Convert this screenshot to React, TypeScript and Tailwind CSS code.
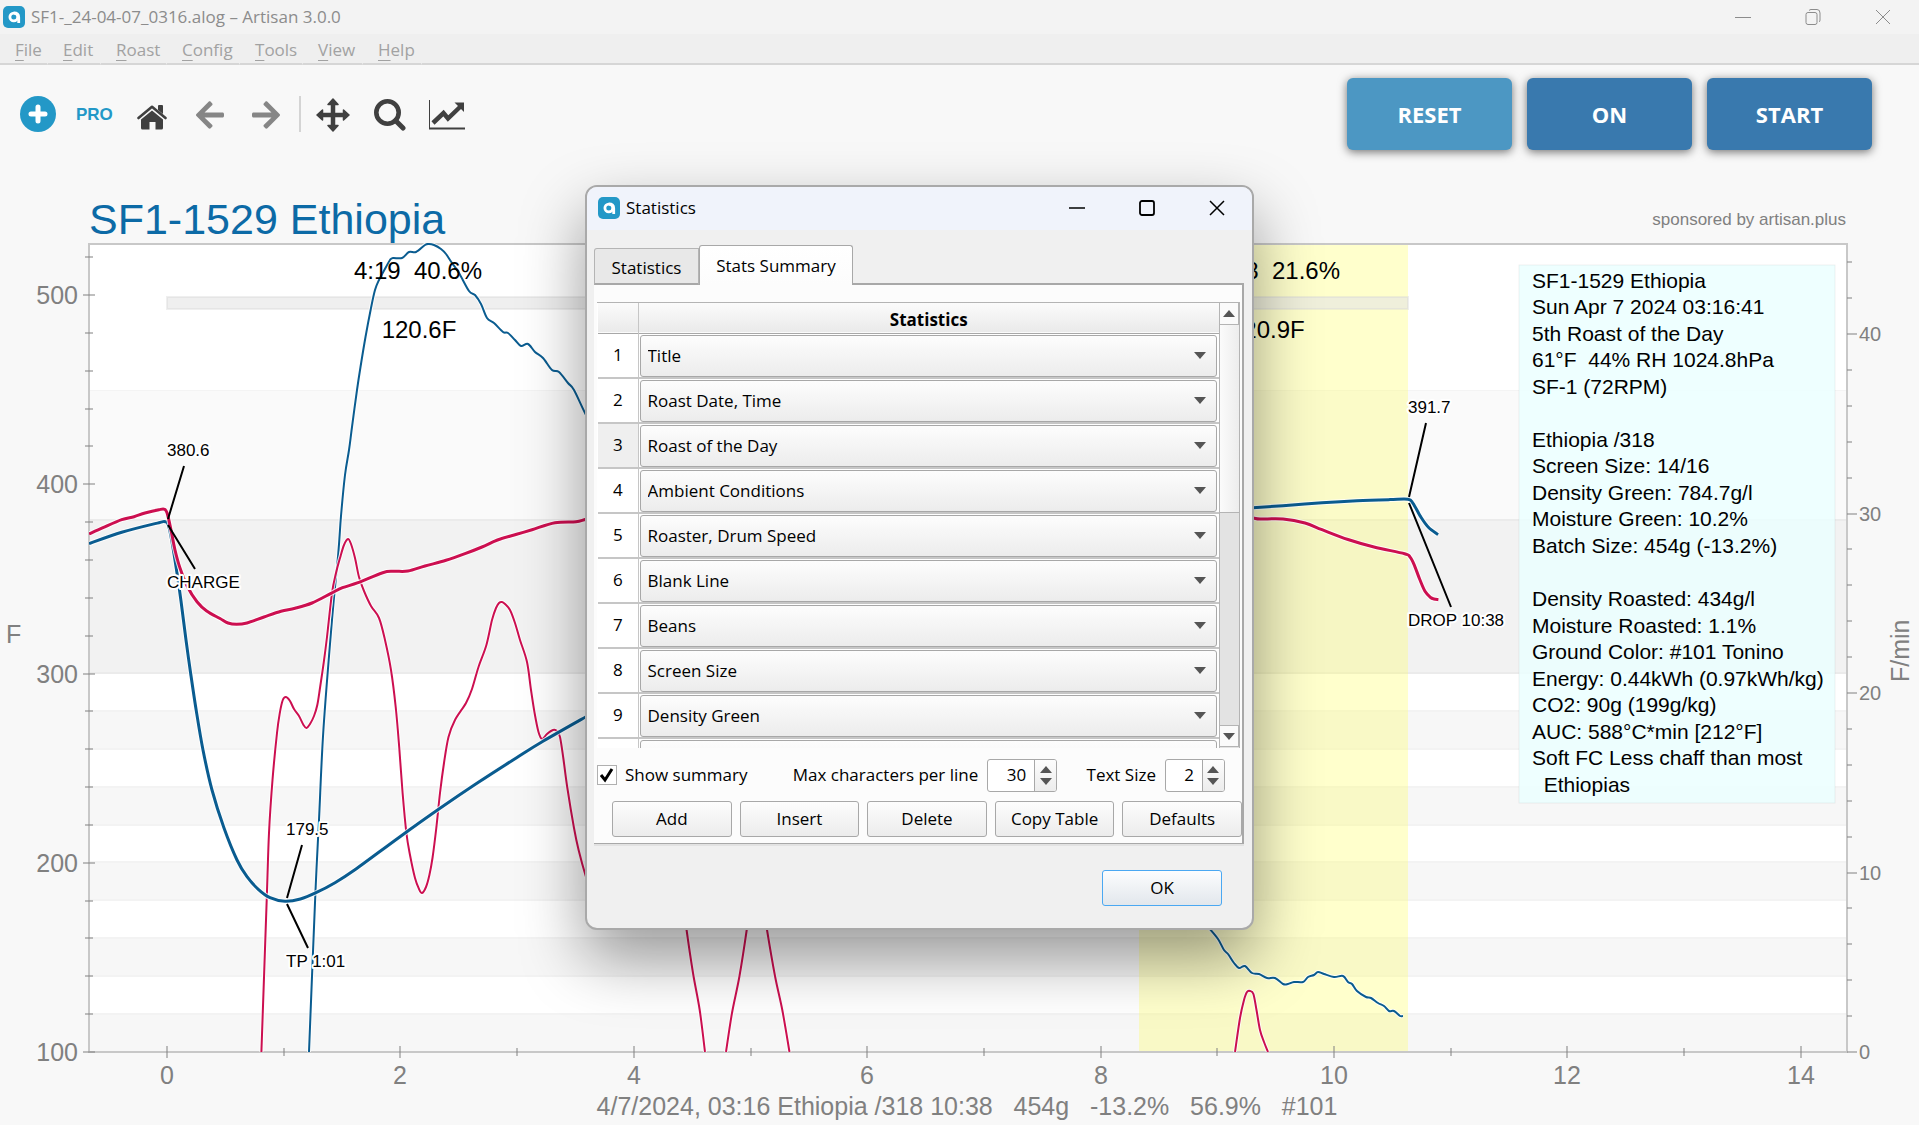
import { useId, useState } from "react";
import { FaArrowLeft, FaArrowRight } from "react-icons/fa";

type Point = [number, number];

const STAT_TYPES = [
  "Title",
  "Roast Date, Time",
  "Roast of the Day",
  "Ambient Conditions",
  "Roaster, Drum Speed",
  "Blank Line",
  "Beans",
  "Screen Size",
  "Density Green",
];

const SUMMARY = [
  "SF1-1529 Ethiopia",
  "Sun Apr 7 2024 03:16:41",
  "5th Roast of the Day",
  "61°F  44% RH 1024.8hPa",
  "SF-1 (72RPM)",
  "",
  "Ethiopia /318",
  "Screen Size: 14/16",
  "Density Green: 784.7g/l",
  "Moisture Green: 10.2%",
  "Batch Size: 454g (-13.2%)",
  "",
  "Density Roasted: 434g/l",
  "Moisture Roasted: 1.1%",
  "Ground Color: #101 Tonino",
  "Energy: 0.44kWh (0.97kWh/kg)",
  "CO2: 90g (199g/kg)",
  "AUC: 588°C*min [212°F]",
  "Soft FC Less chaff than most",
  "  Ethiopias",
];

const MENUS = [
  { label: "File", width: "w-12" },
  { label: "Edit", width: "w-[53px]" },
  { label: "Roast", width: "w-[66px]" },
  { label: "Config", width: "w-[73px]" },
  { label: "Tools", width: "w-[63px]" },
  { label: "View", width: "w-[60px]" },
  { label: "Help", width: "w-[59px]" },
];

/* Curves, in chart units */
const DELTA_BT: Point[][] = [
  [[309, 1052], [315.4, 893], [319, 820], [323.4, 730], [332, 620], [338.3, 553], [341, 516], [345, 475], [349, 450], [352, 427], [357, 390], [360.5, 367], [365.5, 337], [371, 308], [375, 290], [379, 280], [386, 267], [390, 260], [393, 258], [402, 258], [409, 252], [416, 252], [425, 245], [429, 244], [434, 245], [441, 249], [446, 254], [452, 263], [459, 273], [469, 291], [475, 295], [481, 304], [487, 318], [494, 323], [503, 332], [508, 333], [515, 340], [521, 346], [528, 344], [535, 352], [543, 358], [552, 370], [559, 372], [568, 383], [574, 390], [586, 415], [600, 440]],
  [[1200, 918], [1209, 928], [1218, 939], [1224, 950], [1228, 954], [1234, 963], [1239, 968], [1245, 966], [1252, 973], [1259, 974], [1267, 978], [1275, 978], [1283, 984], [1288, 984], [1294, 982], [1303, 982], [1308, 977], [1314, 975], [1318, 972], [1324, 974], [1334, 977], [1343, 976], [1348, 982], [1352, 984], [1357, 991], [1366, 997], [1371, 998], [1378, 1003], [1384, 1006], [1389, 1011], [1394, 1011], [1400, 1016], [1403, 1016]],
];

const DELTA_ET: Point[][] = [
  [[261.4, 1052], [266.7, 900], [269, 833], [272.5, 780], [277, 733], [279.8, 713], [282.8, 700], [286, 697], [290, 701], [294, 709], [299, 716], [303.5, 725], [306.5, 728], [310, 724], [314, 716], [317.3, 705], [320, 688], [323.8, 662], [327, 637], [332, 593], [336, 573], [340, 558], [344, 545], [348, 539], [351, 544], [355, 558], [359, 577], [364, 591], [371, 606], [379, 618], [385, 640], [391, 670], [395.7, 707], [399.2, 747], [402.6, 793], [406.4, 833], [410, 855], [415, 878], [419, 889], [422, 893], [426, 887], [429.4, 875], [432.5, 858], [436.3, 828], [440, 793], [444, 763], [448.5, 737], [455, 720], [466, 703], [472, 689], [478.5, 667], [486.4, 645], [492, 620], [496, 608], [499, 603], [502, 602], [505, 604], [510, 610], [515, 623], [520, 640], [527, 662], [531, 690], [534.6, 713], [538.5, 732], [542, 739], [547, 734], [553, 730], [557, 731], [560, 737], [563.3, 758], [567.2, 787], [574, 828], [578.6, 850], [586, 877], [600, 920]],
  [[680, 880], [686.3, 928], [693, 973], [699.7, 1010], [705, 1052]],
  [[726, 1052], [732, 1013], [739.5, 976], [747, 928], [752, 890]],
  [[761, 890], [766.7, 928], [775, 976], [782.3, 1010], [789.5, 1052]],
  [[1235, 1052], [1240, 1018], [1244, 1000], [1247, 992], [1250, 991], [1253.4, 994], [1256.5, 1010], [1260, 1030], [1264, 1042], [1268, 1052]],
];

const ET: Point[][] = [
  [[89, 534], [103, 527.7], [121.7, 519.7], [134, 516.7], [145, 513], [159, 509.7], [164.6, 509.3], [167.2, 513.3], [171, 530], [175, 550], [180, 568], [187.5, 586.7], [197, 601.7], [206.7, 611], [220, 618.5], [228, 623], [236.5, 624.3], [247, 623], [264, 617], [281, 611.3], [295, 608.3], [312, 603], [331, 593.3], [342.5, 587.7], [358, 582.7], [382.7, 572.7], [394, 571.3], [408, 571], [425, 566], [446, 560.3], [465, 553.7], [482, 547], [497.5, 540], [516.6, 534.3], [532, 529.7], [555, 522.7], [576, 521.7], [586, 519.3], [600, 517]],
  [[1240, 517], [1253, 518], [1260, 519], [1283, 519], [1305, 523], [1322, 529.7], [1348, 539.5], [1374, 547], [1404.6, 553.7], [1410, 557], [1414, 564.3], [1419.7, 579.3], [1425, 591.3], [1430.6, 597.5], [1434, 599], [1438.4, 599.7]],
];

const BT: Point[][] = [
  [[89, 543.7], [121.7, 532.3], [159, 522.7], [165, 521.7], [168.4, 525], [172, 542], [177, 573], [181, 601], [186, 640], [190.6, 673], [196, 709], [203, 750], [212, 790], [224, 828], [237, 860], [247, 876.7], [258.3, 889.3], [270, 897.7], [285, 901.3], [300.4, 899], [316, 892.7], [335, 882.7], [356, 869], [400, 836.7], [440, 808.3], [478.4, 782.3], [516.6, 757.7], [543.4, 741], [586, 716.7], [600, 709]],
  [[1240, 508.5], [1253, 507.7], [1283, 505.7], [1322, 502.7], [1357, 500.7], [1390, 499.6], [1408, 499.3], [1413, 503.3], [1421, 517.3], [1428.4, 527.3], [1438, 534.7]],
];

function smooth(points: Point[]) {
  let d = `M${points[0][0]} ${points[0][1]}`;
  for (let i = 0; i < points.length - 1; i++) {
    const p0 = points[Math.max(i - 1, 0)];
    const p1 = points[i];
    const p2 = points[i + 1];
    const p3 = points[Math.min(i + 2, points.length - 1)];
    const c1 = [p1[0] + (p2[0] - p0[0]) / 6, p1[1] + (p2[1] - p0[1]) / 6];
    const c2 = [p2[0] - (p3[0] - p1[0]) / 6, p2[1] - (p3[1] - p1[1]) / 6];
    d += `C${c1[0]} ${c1[1]} ${c2[0]} ${c2[1]} ${p2[0]} ${p2[1]}`;
  }
  return d;
}

function Curve({ parts, color, width }: { parts: Point[][]; color: string; width: number }) {
  return (
    <g fill="none">
      {parts.map((part, i) => {
        const d = smooth(part);
        return (
          <g key={i}>
            <path d={d} stroke="#ffffff" strokeWidth={width + 2} opacity={0.8} />
            <path d={d} stroke={color} strokeWidth={width} />
          </g>
        );
      })}
    </g>
  );
}

const yOf = (f: number) => Math.round(1052 - (f - 100) * 1.8925);
const xOf = (m: number) => Math.round(167 + m * 116.7);
const rOf = (v: number) => Math.round(1052 - v * 17.95);
const range = (from: number, to: number, step: number) =>
  Array.from({ length: Math.floor((to - from) / step) + 1 }, (_, i) => from + i * step);

function Callout({ x, y, children }: { x: number; y: number; children: string }) {
  return (
    <text x={x} y={y} fontSize="17" fill="#000" stroke="#fff" strokeWidth="4" strokeLinejoin="round" paintOrder="stroke">
      {children}
    </text>
  );
}

function RoastChart() {
  return (
    <svg
      viewBox="0 180 1919 945"
      className="block h-auto w-full font-['Liberation_Sans',Arial,sans-serif]"
      role="img"
      aria-label="Roast profile SF1-1529 Ethiopia"
    >
      <defs>
        <clipPath id="plot">
          <rect x="89" y="243" width="1759" height="809" />
        </clipPath>
      </defs>

      <rect x="89" y="244" width="1758" height="808" fill="#fff" />
      <rect x="89" y="390" width="1758" height="130" fill="#fafafa" />
      <rect x="89" y="520" width="1758" height="153" fill="#f2f2f2" />
      <rect x="89" y="390" width="1758" height="1" fill="#f4f4f4" />
      <rect x="89" y="519" width="1758" height="2" fill="#ebebeb" />
      <rect x="89" y="672" width="1758" height="2" fill="#ebebeb" />
      {[711, 787, 862, 938, 1014].map((y) => (
        <g key={y}>
          <rect x="89" y={y} width="1758" height="38" fill="#f7f7f7" />
          <rect x="89" y={y - 1} width="1758" height="2" fill="#f3f3f3" />
          <rect x="89" y={y + 37} width="1758" height="2" fill="#f3f3f3" />
        </g>
      ))}
      <rect x="1139" y="244" width="269" height="808" fill="#ffff64" opacity="0.33" />
      <rect x="167" y="297" width="1241" height="12" fill="#e4e4e4" fillOpacity="0.6" stroke="#d8d8d8" strokeOpacity="0.4" strokeWidth="2" />

      <g stroke="#808080" strokeOpacity="0.5" strokeWidth="2">
        <path d="M89 244H1847V1052H89Z" fill="none" stroke="#c8c8c8" strokeOpacity="1" />
        {range(100, 500, 100).map((f) => (
          <path key={f} d={`M83 ${yOf(f)}H95`} />
        ))}
        {range(120, 520, 20).filter((f) => f % 100 !== 0).map((f) => (
          <path key={f} d={`M85 ${yOf(f)}H93`} />
        ))}
        {range(0, 40, 10).map((v) => (
          <path key={v} d={`M1847 ${rOf(v)}H1857`} />
        ))}
        {range(2, 44, 2).filter((v) => v % 10 !== 0).map((v) => (
          <path key={v} d={`M1847 ${rOf(v)}H1852`} />
        ))}
        {range(0, 14, 2).map((m) => (
          <path key={m} d={`M${xOf(m)} 1046V1058`} />
        ))}
        {range(1, 13, 2).map((m) => (
          <path key={m} d={`M${xOf(m)} 1048V1056`} />
        ))}
      </g>

      <g clipPath="url(#plot)">
        <Curve parts={DELTA_BT} color="#0a5c90" width={2} />
        <Curve parts={DELTA_ET} color="#cc0f50" width={2} />
        <Curve parts={BT} color="#0a5c90" width={3} />
        <Curve parts={ET} color="#cc0f50" width={3} />
      </g>

      <g stroke="#000" strokeWidth="2">
        <path d="M184 466L168 519M168 525L195 569" />
        <path d="M302 845L287 898M287 904L308 948" />
        <path d="M1426 423L1409 497M1409 503L1451 607" />
      </g>
      <Callout x={167} y={456}>380.6</Callout>
      <Callout x={167} y={588}>CHARGE</Callout>
      <Callout x={286} y={835}>179.5</Callout>
      <Callout x={286} y={967}>TP 1:01</Callout>
      <Callout x={1408} y={413}>391.7</Callout>
      <Callout x={1408} y={626}>DROP 10:38</Callout>

      <g fontSize="24" fill="#000" textAnchor="middle">
        <text x="418" y="279" className="whitespace-pre">{"4:19  40.6%"}</text>
        <text x="419" y="338">120.6F</text>
        <text x="1276" y="279" className="whitespace-pre">{"2:18  21.6%"}</text>
        <text x="1274" y="338">20.9F</text>
      </g>

      <text x="89" y="234" fontSize="43" fill="#0c6aa6">SF1-1529 Ethiopia</text>
      <text x="1846" y="225" fontSize="17" fill="#808080" textAnchor="end">sponsored by artisan.plus</text>

      <g fontSize="25" fill="#808080">
        {range(100, 500, 100).map((f) => (
          <text key={f} x="78" y={yOf(f) + 9} textAnchor="end">{f}</text>
        ))}
        {range(0, 14, 2).map((m) => (
          <text key={m} x={xOf(m)} y="1084" textAnchor="middle">{m}</text>
        ))}
        <text x="6" y="643">F</text>
        <text transform="translate(1909 682) rotate(-90)">F/min</text>
        <text x="967" y="1115" textAnchor="middle" className="whitespace-pre">
          {"4/7/2024, 03:16 Ethiopia /318 10:38   454g   -13.2%   56.9%   #101"}
        </text>
      </g>
      <g fontSize="20" fill="#808080">
        {range(0, 40, 10).map((v) => (
          <text key={v} x="1859" y={rOf(v) + 7}>{v}</text>
        ))}
      </g>

      <rect x="1519" y="265" width="316" height="538" fill="#ebffff" fillOpacity="0.85" stroke="#808080" strokeOpacity="0.12" />
      <g fontSize="21" fill="#000">
        {SUMMARY.map((line, i) => (
          <text key={i} x="1532" y={Math.floor(288 + i * 26.54)} className="whitespace-pre">{line}</text>
        ))}
      </g>
    </svg>
  );
}

function Logo() {
  return (
    <svg viewBox="0 0 22 22" className="size-[22px] shrink-0" aria-hidden="true">
      <rect width="22" height="22" rx="5" fill="#2398c7" />
      <circle cx="10.8" cy="11" r="3.9" fill="none" stroke="#fff" strokeWidth="2.8" />
      <path d="M10.8 7C14.500 7 15.700 9 15.700 11.500V17" fill="none" stroke="#fff" strokeWidth="2.8" />
    </svg>
  );
}

function Triangle({ up = false }: { up?: boolean }) {
  return (
    <svg viewBox="0 0 12 7" className="h-[7px] w-3" aria-hidden="true">
      <path d={up ? "M0 7L6 0L12 7Z" : "M0 0H12L6 7Z"} fill="#555" />
    </svg>
  );
}

function StatRow({ index, value, active }: { index: number; value: string; active: boolean }) {
  const [current, setCurrent] = useState(value);
  return (
    <tr className="border-b-2 border-[#c6c6c6]">
      <th
        scope="row"
        className={`w-10 p-0 text-center font-normal ${active ? "bg-[#efefef]" : "bg-white"}`}
      >
        {value && index}
      </th>
      <td className="border-l border-[#c6c6c6] p-0 pt-px pl-px">
        <div className="relative">
          <select
            aria-label={`Statistic ${index}`}
            value={current}
            onChange={(e) => setCurrent(e.target.value)}
            className="block h-[42px] w-[577px] appearance-none rounded-[3px] border border-[#a8a8a8] bg-linear-to-b from-[#fdfdfd] to-[#ececec] px-[7px] pt-px text-black"
          >
            <option value="" />
            {STAT_TYPES.map((t) => (
              <option key={t}>{t}</option>
            ))}
          </select>
          {value && (
            <span className="pointer-events-none absolute inset-y-0 right-[13px] flex items-center">
              <Triangle />
            </span>
          )}
        </div>
      </td>
    </tr>
  );
}

function Spin({ label, initial, width }: { label: string; initial: number; width: string }) {
  const id = useId();
  const [value, setValue] = useState(initial);
  return (
    <div className="flex items-center gap-[9px]">
      <label htmlFor={id}>{label}</label>
      <div className={`flex h-[33px] overflow-hidden rounded-[3px] border border-[#a8a8a8] bg-white ${width}`}>
        <input
          id={id}
          inputMode="numeric"
          value={value}
          onChange={(e) => setValue(Number(e.target.value) || 0)}
          className="w-0 min-w-0 flex-1 pr-2 text-right"
        />
        <div className="flex w-[22px] flex-col items-center justify-center gap-[5px] border-l border-[#a8a8a8] bg-linear-to-b from-[#fdfdfd] to-[#ececec]">
          <button aria-label={`Increase ${label}`} onClick={() => setValue(value + 1)}><span className="block"><Triangle up /></span></button>
          <button aria-label={`Decrease ${label}`} onClick={() => setValue(value - 1)}><span className="block"><Triangle /></span></button>
        </div>
      </div>
    </div>
  );
}

function StatisticsDialog() {
  const [show, setShow] = useState(true);
  return (
    <section
      role="dialog"
      aria-label="Statistics"
      className="absolute top-[185px] left-[585px] w-[669px] overflow-hidden rounded-xl border-2 border-[#a9a9a9] bg-[#f0f0f0] text-[17px] leading-6 text-black shadow-[0_28px_64px_rgba(0,0,0,0.4)]"
    >
      <header className="flex h-[43px] items-center bg-[#f0f3fb] pb-0.5 pl-[11px]">
        <Logo />
        <h2 className="ml-1.5 flex-1">Statistics</h2>
        <button aria-label="Minimize" className="flex w-[70px] justify-center">
          <svg viewBox="0 0 16 16" className="size-4"><path d="M0 8H16" stroke="#000" strokeWidth="1.500" /></svg>
        </button>
        <button aria-label="Maximize" className="flex w-[70px] justify-center">
          <svg viewBox="0 0 16 16" className="size-4"><rect x="1" y="1" width="14" height="14" rx="2" fill="none" stroke="#000" strokeWidth="1.800" /></svg>
        </button>
        <button aria-label="Close" className="flex w-[70px] justify-center">
          <svg viewBox="0 0 16 16" className="size-4"><path d="M1 1L15 15M15 1L1 15" stroke="#000" strokeWidth="1.500" /></svg>
        </button>
      </header>

      <div className="mr-2 ml-[7px] pt-[15px]">
        <div role="tablist" className="relative z-10 -mb-0.5 flex items-end">
          <button role="tab" aria-selected="false" className="h-[37px] w-[105px] rounded-tl-[3px] border border-b-2 border-[#b4b4b4] border-b-[#a8a8a8] bg-[#e8e8e8] pt-1">
            Statistics
          </button>
          <button role="tab" aria-selected="true" className="h-10 w-[154px] rounded-t-[3px] border border-b-0 border-[#a8a8a8] bg-linear-to-b from-white to-[#fcfcfc]">
            Stats Summary
          </button>
        </div>

        <div role="tabpanel" className="border-t-2 border-r-2 border-b border-[#a8a8a8] bg-[#fcfcfc] pt-[17px] pb-1.5 shadow-[0_2px_0_#e2e2e2]">
          <div className="mr-0.5 ml-[3px] flex h-[446px] border-t border-r border-[#b4b4b4] bg-white pl-px">
            <div className="flex-1 overflow-hidden">
              <table className="w-full table-fixed border-collapse">
                <colgroup>
                  <col className="w-10" />
                  <col />
                </colgroup>
                <thead>
                  <tr className="h-[30px] border-b border-[#a8a8a8] bg-linear-to-b from-[#fbfbfb] to-[#eaeaea]">
                    <td className="p-0" />
                    <th scope="col" className="border-l border-[#c6c6c6] p-0 pt-1 text-center text-[17px] font-bold">Statistics</th>
                  </tr>
                </thead>
                <tbody>
                  {STAT_TYPES.map((name, i) => (
                    <StatRow key={name} index={i + 1} value={name} active={i === 2} />
                  ))}
                  <StatRow index={10} value="" active={false} />
                </tbody>
              </table>
            </div>
            <div className="flex w-5 flex-col border-l border-[#b4b4b4] bg-[#e3e3e3]">
              <button aria-label="Scroll up" className="flex h-[22px] items-center justify-center border-r border-b border-[#b4b4b4] bg-[#fafafa]"><Triangle up /></button>
              <div className="h-[188px] border-b border-[#b4b4b4] bg-linear-to-r from-[#fbfbfb] to-[#ededed]" />
              <div className="flex-1" />
              <button aria-label="Scroll down" className="mb-px flex h-[22px] items-center justify-center border border-l-0 border-[#b4b4b4] bg-[#fafafa]"><Triangle /></button>
            </div>
          </div>

          <div className="mt-2.5 mr-[17px] ml-[3px] flex h-[34px] items-center justify-between">
            <label className="flex items-center gap-2">
              <span className="relative flex size-5">
                <input
                  type="checkbox"
                  checked={show}
                  onChange={(e) => setShow(e.target.checked)}
                  className="size-5 appearance-none border border-[#b0b0b0] bg-white"
                />
                {show && (
                  <svg viewBox="0 0 20 20" className="pointer-events-none absolute inset-0 size-5" aria-hidden="true">
                    <path d="M4 10L8 15L15 4" fill="none" stroke="#000" strokeWidth="3" />
                  </svg>
                )}
              </span>
              Show summary
            </label>
            <div className="ml-4"><Spin label="Max characters per line" initial={30} width="w-[70px]" /></div>
            <Spin label="Text Size" initial={2} width="w-[60px]" />
          </div>

          <div className="mt-[9px] ml-[18px] grid grid-cols-5 gap-2">
            {["Add", "Insert", "Delete", "Copy Table", "Defaults"].map((t) => (
              <button key={t} className="h-9 rounded-[3px] border border-[#a8a8a8] bg-linear-to-b from-[#fdfdfd] to-[#ececec] whitespace-nowrap">
                {t}
              </button>
            ))}
          </div>
        </div>
      </div>

      <footer className="flex justify-end pt-[26px] pr-[30px] pb-[22px]">
        <button className="h-9 w-[120px] rounded-[3px] border border-[#4aa8f2] bg-linear-to-b from-[#fcfdfe] to-[#e2e7ec]">OK</button>
      </footer>
    </section>
  );
}

function ControlButton({ label, tone }: { label: string; tone: string }) {
  return (
    <button className={`h-[72px] w-[165px] rounded-md text-[22px] font-bold text-white shadow-[0_2px_10px_rgba(0,0,0,0.55)] ${tone}`}>
      {label}
    </button>
  );
}

export default function App() {
  return (
    <div className="relative min-h-screen overflow-hidden bg-[#f8f8f8] font-['Open_Sans','Noto_Sans',sans-serif]">
      <header className="flex h-[34px] items-center bg-[#f3f3f3] pr-px pl-[3px] text-[17px] text-[#8c8c8c]">
        <Logo />
        <h1 className="ml-1.5 flex-1">SF1-_24-04-07_0316.alog – Artisan 3.0.0</h1>
        <button aria-label="Minimize" className="flex w-[70px] justify-center">
          <svg viewBox="0 0 16 16" className="size-4"><path d="M0 8.500H16" stroke="#8c8c8c" /></svg>
        </button>
        <button aria-label="Restore" className="flex w-[70px] justify-center">
          <svg viewBox="0 0 16 18" className="h-[18px] w-4" fill="none" stroke="#8c8c8c">
            <rect x="1" y="4.500" width="11" height="12" rx="2" />
            <path d="M4 2.500Q5 1.500 6 1.500H12Q15 1.500 15 5V12Q15 13.500 14 14" />
          </svg>
        </button>
        <button aria-label="Close" className="flex w-[70px] justify-center">
          <svg viewBox="0 0 16 16" className="size-4"><path d="M1 1L15 15M15 1L1 15" stroke="#8c8c8c" /></svg>
        </button>
      </header>

      <nav className="flex h-[31px] bg-[#efefef] text-[17px] text-[#a2a2a2]">
        {MENUS.map((m) => (
          <button key={m.label} className={`h-full border-r border-b-2 border-r-[#efefef] border-b-[#d6d6d6] pt-0.5 pl-[15px] text-left leading-7 ${m.width}`}>
            <span className="underline underline-offset-4">{m.label[0]}</span>
            {m.label.slice(1)}
          </button>
        ))}
        <div className="flex-1 border-b-2 border-[#d6d6d6]" />
      </nav>

      <div className="flex h-[115px] items-start justify-between pt-[13px] pr-[47px] pl-5">
        <div className="flex h-[72px] items-center text-[#404040]">
          <button aria-label="Connect to artisan.plus">
            <svg viewBox="0 0 36 36" className="size-9">
              <circle cx="18" cy="18" r="18" fill="#2398c7" />
              <path d="M18 11V25M11 18H25" stroke="#fff" strokeWidth="5" strokeLinecap="round" />
            </svg>
          </button>
          <button className="ml-5 pt-px font-['Liberation_Sans',Arial,sans-serif] text-[17px] font-bold text-[#2398c7]">PRO</button>
          <button aria-label="Home" className="ml-6 pt-1.5">
            <svg viewBox="0 0 30 25" className="h-[25px] w-[30px]">
              <path d="M21 1Q21 0 22 0H25Q26 0 26 1V9L21 5Z" fill="#404040" />
              <path d="M1.500 13L15 1.800L28.500 13" fill="none" stroke="#404040" strokeWidth="2.600" strokeLinecap="round" strokeLinejoin="round" />
              <path d="M15 5.500L26 14.500V23Q26 24.500 24.500 24.500H18.500V17H12.500V24.500H5.500Q4 24.500 4 23V14.500Z" fill="#404040" />
            </svg>
          </button>
          <button aria-label="Back" className="ml-[27px] pt-px text-[#868686]"><FaArrowLeft className="size-8" /></button>
          <button aria-label="Forward" className="ml-6 pt-px text-[#868686]"><FaArrowRight className="size-8" /></button>
          <div className="ml-[17px] h-9 w-0.5 bg-[#d4d4d4]" />
          <button aria-label="Pan" className="ml-[15px] pt-px">
            <svg viewBox="0 0 34 34" className="size-[34px]" fill="#404040" stroke="#404040" strokeLinejoin="round">
              <path d="M17 4V30M4 17H30" strokeWidth="4.500" />
              <path d="M17 1L22 6.500H12ZM17 33L12 27.500H22ZM1 17L6.500 12V22ZM33 17L27.500 22V12Z" strokeWidth="1.500" />
            </svg>
          </button>
          <button aria-label="Zoom" className="ml-6 pt-px">
            <svg viewBox="0 0 32 32" className="size-8" fill="none" stroke="#404040">
              <circle cx="13.500" cy="13.500" r="11.200" strokeWidth="4.600" />
              <path d="M21.500 21.500L29 29" strokeWidth="5" strokeLinecap="round" />
            </svg>
          </button>
          <button aria-label="Axes" className="ml-[23px] pt-px">
            <svg viewBox="0 0 36 30" className="h-[30px] w-9">
              <path d="M.5 0V29" stroke="#404040" />
              <path d="M0 28.500H36" stroke="#404040" strokeWidth="2" />
              <path d="M4 23L14.500 13L19 18.500L31 7" fill="none" stroke="#404040" strokeWidth="4.500" />
              <path d="M25.500 2.500H35V12Z" fill="#404040" />
            </svg>
          </button>
        </div>
        <div className="flex gap-[15px]">
          <ControlButton label="RESET" tone="bg-[#4c97c3]" />
          <ControlButton label="ON" tone="bg-[#3979ae]" />
          <ControlButton label="START" tone="bg-[#3979ae]" />
        </div>
      </div>

      <RoastChart />
      <StatisticsDialog />
    </div>
  );
}
